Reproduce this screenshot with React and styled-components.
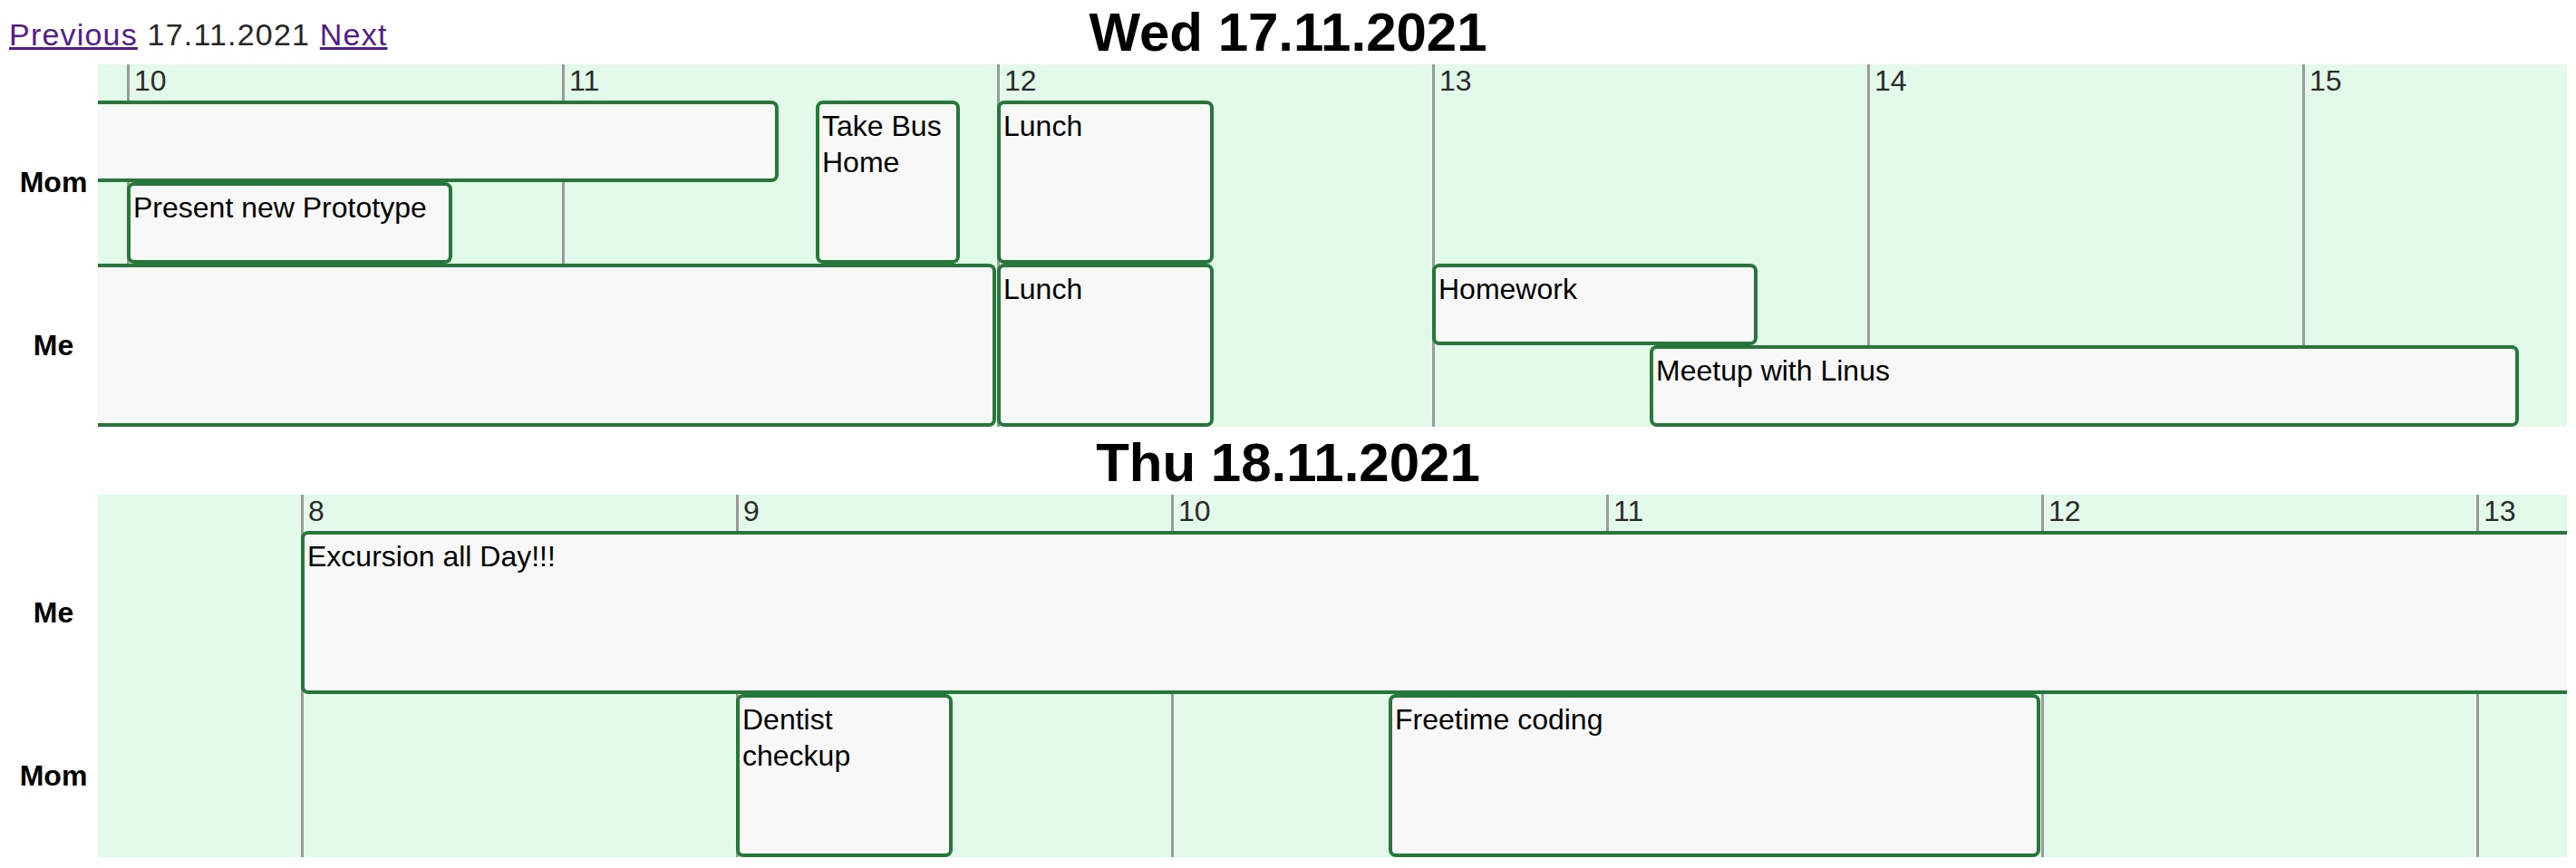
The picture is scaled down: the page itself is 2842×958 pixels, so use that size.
import React from 'react';
import styled, { createGlobalStyle } from 'styled-components';

// one hour on the timeline, one lane of a person row
const HOUR = 480;
const LANE = 90;

const days = [
    {
        title: 'Wed 17.11.2021',
        viewStart: 10 - 32 / HOUR,
        rows: [
            {
                name: 'Mom',
                events: [
                    { title: 'Work', start: 9, end: 11.5, lane: 0, span: 1 },
                    { title: 'Present new Prototype', start: 10, end: 10.75, lane: 1, span: 1 },
                    { title: 'Take Bus Home', start: 11 + 35 / 60, end: 11 + 55 / 60, lane: 0, span: 2 },
                    { title: 'Lunch', start: 12, end: 12.5, lane: 0, span: 2 },
                ],
            },
            {
                name: 'Me',
                events: [
                    { title: 'School', start: 8, end: 12, lane: 0, span: 2 },
                    { title: 'Lunch', start: 12, end: 12.5, lane: 0, span: 2 },
                    { title: 'Homework', start: 13, end: 13.75, lane: 0, span: 1 },
                    { title: 'Meetup with Linus', start: 13.5, end: 15.5, lane: 1, span: 1 },
                ],
            },
        ],
    },
    {
        title: 'Thu 18.11.2021',
        viewStart: 8 - 224 / HOUR,
        rows: [
            {
                name: 'Me',
                events: [
                    { title: 'Excursion all Day!!!', start: 8, end: 20, lane: 0, span: 2 },
                ],
            },
            {
                name: 'Mom',
                events: [
                    { title: 'Dentist checkup', start: 9, end: 9.5, lane: 0, span: 2 },
                    { title: 'Freetime coding', start: 10.5, end: 12, lane: 0, span: 2 },
                ],
            },
        ],
    },
];

const hours = Array.from({ length: 24 }, (_, i) => i);

const GlobalStyle = createGlobalStyle`
    body {
        margin : 0;
        background : #fff;
        font-family : 'Liberation Sans', Arial, sans-serif;
    }
`;

const Page = styled.div`
    display : flex;
    flex-direction : column;
    gap : 4px;
    padding : 0 10px;
`;

const TitleRow = styled.div`
    display : grid;
    grid-template-columns : 1fr auto 1fr;
    height : 71px;
`;

const Nav = styled.nav`
    padding-top : 19px;
    font-size : 34px;
    letter-spacing : 1.2px;
    color : #262626;
    white-space : nowrap;

    a {
        color : #551a8b;
        text-decoration : underline;
    }
`;

const DayTitle = styled.h1`
    grid-column : 2;
    margin : 0;
    font-size : 60px;
    font-weight : bold;
    line-height : 71px;
    color : #000;
`;

const Body = styled.div`
    display : flex;
`;

const Labels = styled.div`
    flex : none;
    width : 98px;
    padding-top : 40px;
    display : flex;
    flex-direction : column;
`;

const Label = styled.div`
    height : ${LANE * 2}px;
    display : flex;
    align-items : center;
    justify-content : center;
    font-size : 32px;
    font-weight : bold;
    color : #000;
`;

const Timeline = styled.div`
    flex : 1;
    min-width : 0;
    overflow : hidden;
    background : #e3f9e9;
    display : grid;
    grid-template-columns : minmax(0, 1fr);
    grid-template-rows : 40px repeat(${p => p.lanes}, ${LANE}px);
`;

const HourLine = styled.div`
    grid-column : 1;
    grid-row : 1 / -1;
    justify-self : start;
    width : 3px;
    background : #9a9a9a;
`;

const HourLabel = styled.div`
    grid-column : 1;
    grid-row : 1;
    justify-self : start;
    padding-left : 5px;
    font-size : 32px;
    color : #2b2b2b;
    white-space : nowrap;
`;

const Event = styled.div`
    grid-column : 1;
    justify-self : start;
    box-sizing : border-box;
    padding : 4px 3px;
    border : 4px solid #26783a;
    border-radius : 8px;
    background : #f8f8f8;
    font-size : 32px;
    line-height : 40px;
    color : #000;
    overflow : hidden;
`;

const DaySection = ({ day, nav }) => {
    const x = h => (h - day.viewStart) * HOUR;
    return (
        <section>
            <TitleRow>
                {nav}
                <DayTitle>{day.title}</DayTitle>
            </TitleRow>
            <Body>
                <Labels>
                    {day.rows.map(r => <Label key = {r.name}>{r.name}</Label>)}
                </Labels>
                <Timeline lanes = {day.rows.length * 2}>
                    {hours.map(h => (
                        <HourLine key = {'l' + h} style = {{ marginLeft : x(h) }}/>
                    ))}
                    {hours.map(h => (
                        <HourLabel key = {'t' + h} style = {{ marginLeft : x(h) + 3 }}>{h}</HourLabel>
                    ))}
                    {day.rows.map((r, i) => r.events.map(e => (
                        <Event
                            key = {r.name + e.title}
                            style = {{
                                gridRow : `${2 + i * 2 + e.lane} / span ${e.span}`,
                                marginLeft : x(e.start),
                                width : (e.end - e.start) * HOUR - 1,
                            }}
                        >
                            {e.title}
                        </Event>
                    )))}
                </Timeline>
            </Body>
        </section>
    );
};

const App = () => {
    return (
        <>
            <GlobalStyle/>
            <Page>
                {days.map((d, i) => (
                    <DaySection
                        key = {d.title}
                        day = {d}
                        nav = {i === 0 ? (
                            <Nav>
                                <a href = '#'>Previous</a> 17.11.2021 <a href = '#'>Next</a>
                            </Nav>
                        ) : <div/>}
                    />
                ))}
            </Page>
        </>
    );
};

export default App;
